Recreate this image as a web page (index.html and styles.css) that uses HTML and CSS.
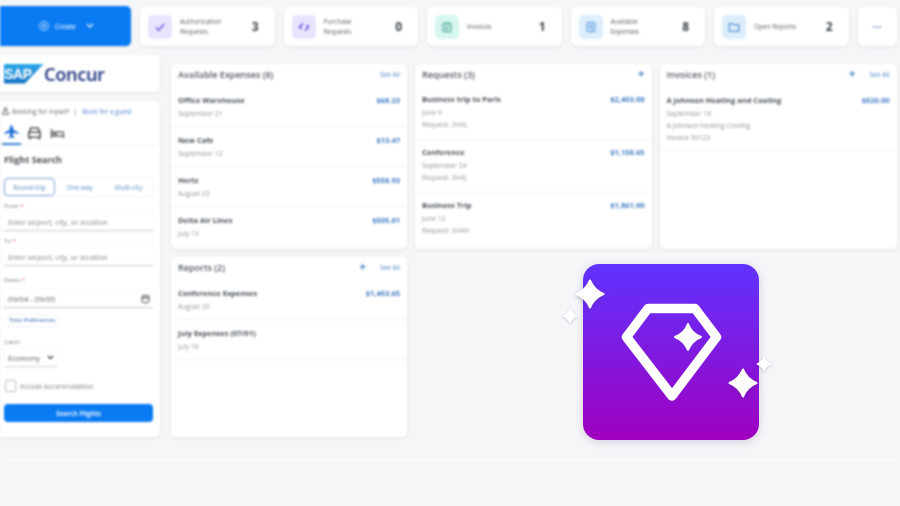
FILE: index.html
```html
<!DOCTYPE html>
<html lang="en">
<head>
  <meta charset="UTF-8" />
  <title>SAP Concur</title>
  <link rel="stylesheet" href="styles.css">
</head>
<body>
  <div class="page">
    <div class="top-row">
      <button class="create-btn">
        <svg width="10" height="10" viewBox="0 0 10 10" fill="none" stroke="#cfe4ff" stroke-width="1"><circle cx="5" cy="5" r="4.3"/><circle cx="5" cy="5" r="1.4"/></svg>
        <span>Create</span>
        <svg class="create-caret" width="8" height="6" viewBox="0 0 8 6" fill="none" stroke="#d8e9ff" stroke-width="1.5"><path d="M1 1l3 3 3-3"/></svg>
      </button>

      <div class="tile">
        <div class="tile-icon purple">
          <svg width="12" height="12" viewBox="0 0 12 12" fill="none" stroke="#6a4fe0" stroke-width="1.4"><path d="M2 6.5l2.800 2.700L10 3"/></svg>
        </div>
        <div class="tile-label">Authorization Requests</div>
        <div class="tile-num">3</div>
      </div>
      <div class="tile">
        <div class="tile-icon purple">
          <svg width="12" height="12" viewBox="0 0 12 12" fill="none" stroke="#6a4fe0" stroke-width="1.6"><path d="M5 2.500L1.500 6l2 2M7 9.500L10.500 6l-2-2"/></svg>
        </div>
        <div class="tile-label">Purchase Requests</div>
        <div class="tile-num">0</div>
      </div>
      <div class="tile">
        <div class="tile-icon teal">
          <svg width="12" height="12" viewBox="0 0 12 12" fill="none" stroke="#2f8f83" stroke-width="1"><rect x="2" y="2.500" width="8" height="8" rx="1"/><path d="M4 1.200v2.200M8 1.200v2.200M4 6h4M4 8h3"/></svg>
        </div>
        <div class="tile-label">Invoices</div>
        <div class="tile-num">1</div>
      </div>
      <div class="tile">
        <div class="tile-icon blue">
          <svg width="12" height="12" viewBox="0 0 12 12" fill="none" stroke="#3f86d6" stroke-width="1"><rect x="2.200" y="1.500" width="7.600" height="9" rx=".8"/><path d="M4 4.500h4M4 6.500h4M6.500 8.500h1.500"/></svg>
        </div>
        <div class="tile-label">Available Expenses</div>
        <div class="tile-num">8</div>
      </div>
      <div class="tile">
        <div class="tile-icon blue">
          <svg width="12" height="12" viewBox="0 0 12 12" fill="none" stroke="#3f7fc8" stroke-width="1.100"><path d="M1.200 2.500h3.400l1 1.300h5.200v5.700a.7.7 0 0 1-.7.7H1.900a.7.7 0 0 1-.7-.7z"/></svg>
        </div>
        <div class="tile-label">Open Reports</div>
        <div class="tile-num">2</div>
      </div>
      <div class="tile more-tile">&middot;&middot;&middot;</div>
    </div>

    <div class="main-row">
      <div class="left-col">
        <div class="logo-card">
          <span class="sap-mark">SAP</span>
          <span class="concur-word">Concur</span>
        </div>

        <div class="search-card">
          <div class="booking-line">
            <svg width="7" height="8" viewBox="0 0 7 8" fill="none" stroke="#666" stroke-width="1"><circle cx="3.500" cy="2" r="1.500"/><path d="M.8 7.500V5.200L2 4h3l1.200 1.200v2.300z"/></svg>
            <span>Booking for myself</span>
            <span class="sep">|</span>
            <a class="link">Book for a guest</a>
          </div>

          <div class="mode-tabs">
            <div class="mode-tab active">
              <svg width="15" height="14" viewBox="0 0 15 14" fill="#1f6fd8"><path d="M6.500 0.500h2L9.500 5l5 2.500v1.500L9.200 7.800 8.800 11l1.700 1.300v1L7.500 12.600 4.500 13.300v-1L6.200 11 5.800 7.800 .5 9V7.500L5.500 5z"/></svg>
            </div>
            <div class="mode-tab">
              <svg width="15" height="14" viewBox="0 0 15 14" fill="none" stroke="#555" stroke-width="1.600"><path d="M2.500 6l1.300-4h7.400l1.300 4M1.800 6.200h11.400v5H1.800zM3 11.500v2M12 11.500v2"/></svg>
            </div>
            <div class="mode-tab">
              <svg width="15" height="14" viewBox="0 0 15 14" fill="none" stroke="#666" stroke-width="1.500"><path d="M1.500 3v9M1.500 10h12v2M13.500 10V7.500a1.500 1.500 0 0 0-1.500-1.500H6v4"/><circle cx="3.800" cy="7" r="1"/></svg>
            </div>
          </div>

          <div class="form-body">
            <h3 class="search-title">Flight Search</h3>

            <div class="trip-type">
              <div class="trip-opt selected">Round-trip</div>
              <div class="trip-opt">One-way</div>
              <div class="trip-opt">Multi-city</div>
            </div>

            <label class="field-label">From <em>*</em></label>
            <div class="field placeholder">Enter airport, city, or location</div>

            <label class="field-label">To <em>*</em></label>
            <div class="field placeholder">Enter airport, city, or location</div>

            <label class="field-label dates-label">Dates <em>*</em></label>
            <div class="field date-field">
              <span>09/04 - 09/05</span>
              <svg width="9" height="9" viewBox="0 0 9 9" fill="none" stroke="#555" stroke-width="1"><rect x="1" y="1.500" width="7" height="7" rx="1"/><path d="M1 3.700h7" stroke-width="1.400"/></svg>
            </div>

            <div class="time-chip">Time Preferences</div>

            <label class="field-label cabin-label">Cabin</label>
            <div class="cabin-select">
              <span>Economy</span>
              <svg width="7" height="5" viewBox="0 0 7 5" fill="none" stroke="#444" stroke-width="1.400"><path d="M1 1l2.500 2.500L6 1"/></svg>
            </div>

            <div class="check-row">
              <span class="check-box"></span>
              <span>Include Accommodation</span>
            </div>

            <button class="search-btn">Search Flights</button>
          </div>
        </div>
      </div>

      <div class="card-grid">
        <section class="card">
          <div class="card-head">
            <h2>Available Expenses (8)</h2>
            <a class="link see-all">See All</a>
          </div>
          <div class="item"><div class="item-top"><b>Office Warehouse</b><span class="amount">$68.23</span></div><div class="sub">September 21</div></div>
          <div class="item"><div class="item-top"><b>New Cafe</b><span class="amount">$13.47</span></div><div class="sub">September 12</div></div>
          <div class="item"><div class="item-top"><b>Hertz</b><span class="amount">$558.93</span></div><div class="sub">August 23</div></div>
          <div class="item"><div class="item-top"><b>Delta Air Lines</b><span class="amount">$505.81</span></div><div class="sub">July 13</div></div>
        </section>

        <section class="card">
          <div class="card-head">
            <h2>Requests (3)</h2>
            <span class="plus">+</span>
          </div>
          <div class="item tall"><div class="item-top"><b>Business trip to Paris</b><span class="amount">$2,403.08</span></div><div class="sub">June 9</div><div class="sub">Request: 3H4L</div></div>
          <div class="item tall"><div class="item-top"><b>Conference</b><span class="amount">$1,158.65</span></div><div class="sub">September 24</div><div class="sub">Request: 3H4J</div></div>
          <div class="item tall"><div class="item-top"><b>Business Trip</b><span class="amount">$1,861.00</span></div><div class="sub">June 12</div><div class="sub">Request: 3H4H</div></div>
        </section>

        <section class="card">
          <div class="card-head">
            <h2>Invoices (1)</h2>
            <span class="plus">+</span>
            <a class="link see-all">See All</a>
          </div>
          <div class="item"><div class="item-top"><b>A Johnson Heating and Cooling</b><span class="amount">$520.00</span></div><div class="sub">September 18</div><div class="sub">A Johnson Heating Cooling</div><div class="sub">Invoice 50123</div></div>
        </section>

        <section class="card">
          <div class="card-head">
            <h2>Reports (2)</h2>
            <span class="plus">+</span>
            <a class="link see-all">See All</a>
          </div>
          <div class="item"><div class="item-top"><b>Conference Expenses</b><span class="amount">$1,453.65</span></div><div class="sub">August 20</div></div>
          <div class="item"><div class="item-top"><b>July Expenses (07/01)</b></div><div class="sub">July 16</div></div>
        </section>
      </div>
    </div>

    <div class="footer-band"></div>
  </div>

  <div class="app-icon">
    <svg class="app-art" width="176" height="176" viewBox="0 0 176 176">
      <defs>
        <path id="spark" d="M0-10C2-5 5-2 10 0 5 2 2 5 0 10-2 5-5 2-10 0-5-2-2-5 0-10z" stroke="#fff" stroke-width="1.500" stroke-linejoin="round"/>
      </defs>
      <path d="M65 44.500h47l21.500 28.500L89 132 43.500 73z" fill="none" stroke="#fff" stroke-width="9.500" stroke-linejoin="round"/>
      <use href="#spark" fill="#fff" transform="translate(105 73) scale(1.300)"/>
      <use href="#spark" class="spark-shadow" fill="#fff" transform="translate(7 30) scale(1.350)"/>
      <use href="#spark" class="spark-shadow" fill="#fff" transform="translate(-13 52) scale(.7)"/>
      <use href="#spark" class="spark-shadow" fill="#fff" transform="translate(160 119) scale(1.350)"/>
      <use href="#spark" class="spark-shadow" fill="#fff" transform="translate(181 100) scale(.7)"/>
    </svg>
  </div>
</body>
</html>
```

FILE: styles.css
```css
* {
  box-sizing: border-box;
}

html, body {
  margin: 0;
  height: 506px;
  overflow: hidden;
}

body {
  position: relative;
  background-color: #f5f6f8;
  color: #3a4149;
  font-family: "Open Sans", "Noto Sans", sans-serif;
}

.page {
  height: 506px;
  padding-top: 6px;
  filter: blur(0.8px);
}

/* Top row */
.top-row {
  display: flex;
  gap: 9px;
  height: 40px;
}

.create-btn {
  width: 131px;
  border: none;
  border-radius: 0 5px 5px 0;
  background-color: #0a7bf2;
  color: #dcecff;
  font-family: inherit;
  font-size: 6.5px;
  font-weight: 600;
  display: flex;
  align-items: center;
  justify-content: center;
  gap: 6px;
  padding: 0 0 0 2px;
  box-shadow: 0 1px 2px rgba(0, 0, 0, 0.12);
}

.create-caret {
  margin-left: 4px;
}

.tile {
  width: 134.5px;
  background-color: #fff;
  border-radius: 6px;
  box-shadow: 0 1px 3px rgba(40, 50, 70, 0.1);
  display: flex;
  align-items: center;
  padding: 0 16px 0 8px;
  margin-top: 1px;
  height: 39px;
}

.tile-icon {
  width: 24px;
  height: 24px;
  border-radius: 5px;
  display: flex;
  align-items: center;
  justify-content: center;
  flex-shrink: 0;
}

.purple { background-color: #e9e4fd; }
.teal { background-color: #d5f7ef; }
.blue { background-color: #dcedfc; }

.tile-label {
  margin-left: 8px;
  font-size: 6.5px;
  line-height: 10px;
  color: #5b6269;
  max-width: 50px;
}

.tile-num {
  margin-left: auto;
  font-size: 12px;
  font-weight: 700;
  color: #3c444c;
}

.more-tile {
  width: 39px;
  flex-shrink: 0;
  padding: 0;
  justify-content: center;
  color: #6f8ab8;
  font-size: 11px;
  font-weight: 700;
}

/* Main area */
.main-row {
  display: flex;
  margin-top: 9px;
}

.left-col {
  width: 160px;
  flex-shrink: 0;
}

.logo-card {
  height: 37px;
  background-color: #fff;
  border-radius: 0 5px 5px 0;
  box-shadow: 0 1px 3px rgba(40, 50, 70, 0.1);
  display: flex;
  align-items: center;
  padding-left: 4px;
}

.sap-mark {
  width: 40px;
  height: 20px;
  background: linear-gradient(#2fa8ea, #1070c4);
  clip-path: polygon(0 0, 100% 0, 52% 100%, 0 100%);
  color: #fff;
  font-family: "Liberation Sans", sans-serif;
  font-size: 14px;
  font-weight: 700;
  line-height: 20px;
  letter-spacing: -0.5px;
}

.concur-word {
  color: #2c3f86;
  font-family: "Noto Sans", sans-serif;
  font-size: 18px;
  font-weight: 600;
  letter-spacing: -0.3px;
}

.search-card {
  height: 336px;
  margin-top: 9px;
  background-color: #fff;
  border-radius: 0 5px 5px 0;
  box-shadow: 0 1px 3px rgba(40, 50, 70, 0.1);
}

.booking-line {
  display: flex;
  align-items: center;
  gap: 3px;
  height: 20px;
  padding: 0 2px;
  font-size: 6.5px;
  color: #666c73;
}

.sep {
  margin: 0 2px;
}

.link {
  color: #4f86c6;
}

.mode-tabs {
  display: flex;
  gap: 4px;
  height: 25px;
  padding-left: 2px;
  border-bottom: 1px solid #f0f1f3;
}

.mode-tab {
  width: 19px;
  height: 24px;
  display: flex;
  align-items: center;
  justify-content: center;
}

.mode-tab.active {
  border-bottom: 2px solid #3c83d8;
}

.form-body {
  padding: 7px 7px 0 4px;
}

.search-title {
  margin: 0;
  height: 14px;
  line-height: 14px;
  font-size: 9px;
  font-weight: 700;
  color: #4a5158;
}

.trip-type {
  display: flex;
  height: 18px;
  margin: 11px 0 6px;
  border-radius: 4px;
  box-shadow: 0 0 2px rgba(40, 50, 70, 0.15);
}

.trip-opt {
  flex: 1;
  display: flex;
  align-items: center;
  justify-content: center;
  font-size: 6.5px;
  color: #5f8fc8;
}

.trip-opt.selected {
  border: 1px solid #7ea6d6;
  border-radius: 4px;
}

.field-label {
  display: block;
  margin-top: 6px;
  height: 9px;
  line-height: 9px;
  font-size: 6px;
  color: #777d84;
}

.field-label em {
  color: #d0525c;
  font-style: normal;
}

.field {
  height: 18px;
  margin-top: 2px;
  padding: 0 3px 0 4px;
  display: flex;
  align-items: center;
  justify-content: space-between;
  font-size: 7.7px;
  color: #5c6269;
  background-color: #fff;
  border-bottom: 1px solid #c8ccd0;
  box-shadow: 0 0 2px rgba(40, 50, 70, 0.08);
}

.placeholder {
  font-style: italic;
  color: #80868c;
}

.field-label.dates-label {
  margin-top: 10px;
}

.date-field {
  margin-top: 5px;
}

.time-chip {
  width: 56px;
  height: 13px;
  margin-top: 6px;
  border-radius: 7px;
  border: 1px solid #eceff3;
  font-size: 5.5px;
  font-weight: 600;
  line-height: 11px;
  text-align: center;
  color: #4f7cb8;
}

.field-label.cabin-label {
  margin-top: 11px;
}

.cabin-select {
  width: 53px;
  height: 18px;
  margin-top: 2px;
  padding: 0 3px 0 4px;
  display: flex;
  align-items: center;
  justify-content: space-between;
  font-size: 7.5px;
  color: #555b62;
  border-bottom: 1px solid #d4d7da;
  box-shadow: 0 0 2px rgba(40, 50, 70, 0.08);
}

.check-row {
  display: flex;
  align-items: center;
  gap: 4px;
  margin-top: 13px;
  padding-left: 1px;
  font-size: 6.5px;
  color: #7b8188;
}

.check-box {
  width: 11px;
  height: 12px;
  border: 1px solid #b9bdc2;
  border-radius: 2px;
}

.search-btn {
  display: block;
  width: 100%;
  height: 18px;
  margin-top: 12px;
  border: none;
  border-radius: 4px;
  background-color: #0a7bf2;
  color: #e2efff;
  font-family: inherit;
  font-size: 6.5px;
  font-weight: 700;
}

/* Cards */
.card-grid {
  display: grid;
  grid-template-columns: 236px 236.5px 237px;
  grid-template-rows: 185px 180px;
  gap: 8px;
  margin: 9px 0 0 11px;
}

.card {
  background-color: #fff;
  border-radius: 5px;
  box-shadow: 0 1px 3px rgba(40, 50, 70, 0.1);
  overflow: hidden;
}

.card-head {
  display: flex;
  align-items: center;
  gap: 14px;
  height: 20px;
  padding: 0 7px;
  margin-bottom: 3px;
}

.card-head h2 {
  flex: 1;
  margin: 0;
  font-size: 9px;
  font-weight: 600;
  color: #555c64;
}

.see-all {
  font-size: 6.5px;
}

.plus {
  color: #3f7cc4;
  font-size: 12px;
  line-height: 12px;
  font-weight: 600;
}

.item {
  padding: 6px 7px;
  border-bottom: 1px solid #f3f4f6;
}

.item-top {
  display: flex;
  justify-content: space-between;
  height: 15px;
  line-height: 14px;
  font-size: 7.5px;
}

.item-top b {
  font-weight: 700;
  color: #4c535a;
}

.amount {
  font-weight: 700;
  color: #3f7cc4;
}

.sub {
  font-size: 6.8px;
  line-height: 12px;
  color: #90959b;
}

.item.tall {
  padding: 5px 7px 8px;
}

.footer-band {
  height: 1px;
  margin-top: 23px;
  background-color: #fff;
}

/* Floating app icon */
.app-icon {
  position: absolute;
  left: 583px;
  top: 264px;
  width: 176px;
  height: 176px;
  border-radius: 16px;
  background: linear-gradient(#5f33ff, #a000bf);
  box-shadow: 0 2px 8px rgba(60, 40, 120, 0.18);
}

.app-art {
  display: block;
  overflow: visible;
}

.spark-shadow {
  filter: drop-shadow(0 1px 1.5px rgba(70, 60, 110, 0.3));
}
```
